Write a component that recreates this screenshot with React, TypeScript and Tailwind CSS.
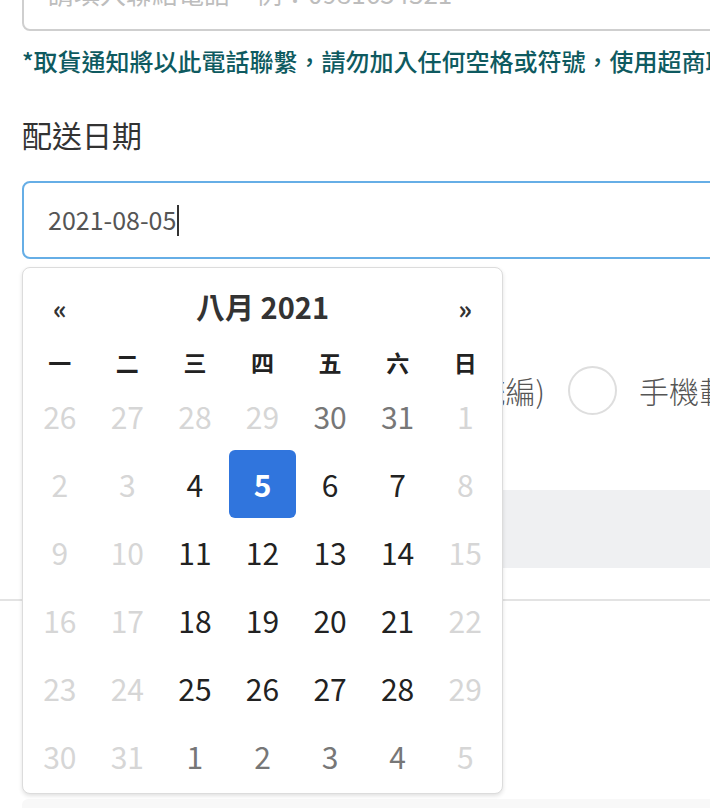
import React from 'react'

const font = { fontFamily: '"Noto Sans CJK TC", "Noto Sans", sans-serif' }

type Day = { n: number; kind: 'off' | 'other' | 'on' | 'sel' }

const weeks: Day[][] = [
  [26, 27, 28, 29, 30, 31, 1],
  [2, 3, 4, 5, 6, 7, 8],
  [9, 10, 11, 12, 13, 14, 15],
  [16, 17, 18, 19, 20, 21, 22],
  [23, 24, 25, 26, 27, 28, 29],
  [30, 31, 1, 2, 3, 4, 5],
].map((row, r) =>
  row.map((n, c) => {
    let kind: Day['kind'] = 'on'
    if (c === 0 || c === 1 || c === 6) kind = 'off'
    else if (r === 0 && c < 4) kind = 'off'
    else if (r === 0 || r === 5) kind = 'other'
    if (r === 1 && c === 3) kind = 'sel'
    return { n, kind }
  })
)

const dayClass: Record<Day['kind'], string> = {
  off: 'text-[#d6d6d6]',
  other: 'text-[#777777]',
  on: 'text-[#222222]',
  sel: 'bg-[#3075dd] text-white font-bold rounded-md',
}

function Calendar() {
  return (
    <div className="absolute left-[22px] top-[267px] w-[481px] rounded-lg border border-[#dcdcdc] bg-white px-[3px] pt-[4px] pb-[3px] shadow-[0_2px_4px_rgba(0,0,0,0.12)]">
      <div className="grid h-[70px] grid-cols-7 items-center text-[#333]">
        <span className="text-center text-[26px] font-bold">«</span>
        <span className="col-span-5 text-center text-[29px] font-bold">八月 2021</span>
        <span className="text-center text-[26px] font-bold">»</span>
      </div>
      <div className="grid h-[40px] grid-cols-7 items-center text-[23px] font-bold text-[#222]">
        {['一', '二', '三', '四', '五', '六', '日'].map(d => (
          <span key={d} className="text-center">{d}</span>
        ))}
      </div>
      {weeks.map((row, i) => (
        <div key={i} className="grid grid-cols-7">
          {row.map((d, j) => (
            <div key={j} className={`flex h-[68px] items-center justify-center text-[30px] ${dayClass[d.kind]}`}>
              {d.n}
            </div>
          ))}
        </div>
      ))}
    </div>
  )
}

export default function App() {
  return (
    <div className="relative h-[808px] w-[710px] overflow-hidden bg-white" style={font}>
      <div className="w-[820px] pl-[22px]">
        <div className="mt-[-47px] flex h-[78px] items-center whitespace-nowrap rounded-lg border-2 border-[#cfcfcf] pl-[24px] text-[26px] text-[#bdbdbd]">
          請填入聯絡電話，例：0981654321
        </div>
        <p className="mt-[15px] whitespace-nowrap text-[24px] leading-[30px] font-medium text-[#0e5a60]">
          *取貨通知將以此電話聯繫，請勿加入任何空格或符號，使用超商取貨請填寫正確手機號碼
        </p>
        <h3 className="mt-[38px] text-[30px] leading-[40px] text-[#333]">配送日期</h3>
        <div className="mt-[27px] flex h-[78px] items-center rounded-lg border-2 border-[#66aee6] pl-[24px] text-[25px] text-[#555]">
          2021-08-05<span className="ml-px h-[31px] w-[2px] bg-[#333]" />
        </div>
        <h3 className="mt-[38px] text-[30px] leading-[40px] text-[#333]">發票類型</h3>
        <div className="mt-[28px] flex h-[50px] items-center whitespace-nowrap text-[30px] font-light text-[#555]">
          <span className="w-[523px] shrink-0 overflow-hidden text-right">二聯式　三聯式(統編)</span>
          <span className="ml-[23px] h-[49px] w-[49px] shrink-0 rounded-full border-2 border-[#dedede]" />
          <span className="ml-[22px]">手機載具</span>
        </div>
        <div className="mt-[75px] h-[78px] rounded-md bg-[#eff0f2]" />
      </div>
      <div className="mt-[31px] h-[2px] bg-[#e3e3e3]" />
      <div className="w-[820px] pl-[22px]">
        <div className="mt-[198px] h-[40px] rounded-md bg-[#f8f8f8]" />
      </div>
      <Calendar />
    </div>
  )
}
